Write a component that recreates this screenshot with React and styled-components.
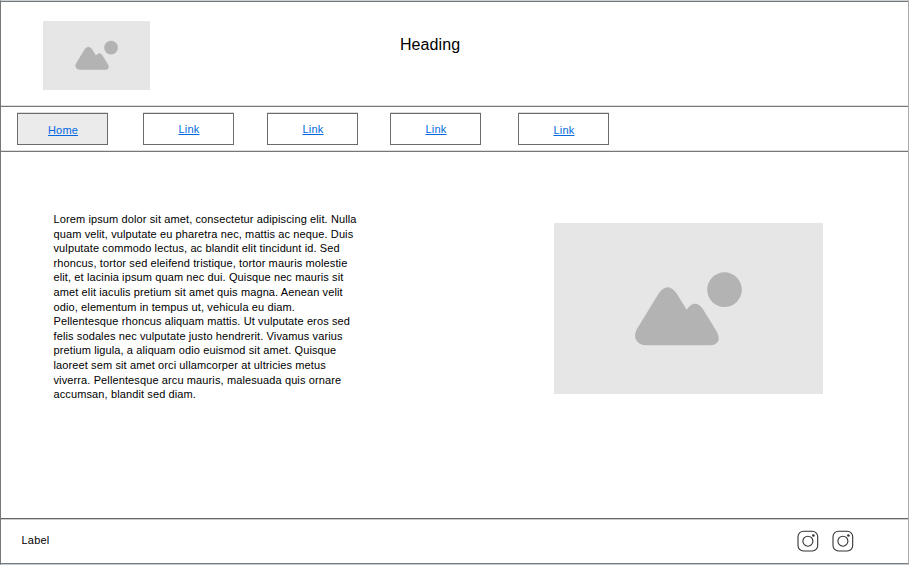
import React from "react";
import styled, { createGlobalStyle } from "styled-components";

const GlobalStyle = createGlobalStyle`
  * { box-sizing: border-box; }
  body {
    margin: 0;
    background: #fff;
    color: #000;
    font-family: "Liberation Sans", Arial, sans-serif;
  }
`;

const Page = styled.div`
  display: flex;
  flex-direction: column;
  width: 909px;
  height: 565px;
  overflow: hidden;
  border: solid #777;
  border-width: 1px 0 0 1px;
  border-top-color: #ccd0d2;
  border-right: 1px solid #aaa;
  border-bottom: 1px solid #c4cbce;
`;

const Header = styled.header`
  display: flex;
  align-items: flex-start;
  height: 106px;
  padding: 19.4px 0 0 42px;
  border-top: 1px solid #73787b;
  border-bottom: 1px solid #777;
  box-shadow: inset 0 -1px #ddd;
`;

const Title = styled.h1`
  margin: 14px 0 0 249.5px;
  font-size: 16px;
  line-height: 20px;
  font-weight: 400;
  letter-spacing: 0.1px;
`;

const Nav = styled.nav`
  display: flex;
  align-items: flex-start;
  height: 45px;
  padding: 6px 0 0 16px;
  border-bottom: 1px solid #777;
  box-shadow: inset 0 -1px #ddd;
`;

const NavLink = styled.a`
  width: 91px;
  height: 32px;
  margin-right: ${(p) => p.$gap || 0}px;
  padding: ${(p) => p.$drop || 9}px 0 0 1px;
  border: 1px solid #6b6b6b;
  box-shadow: 0 -1px #ddd;
  background: ${(p) => (p.$active ? "#ebebeb" : "#fff")};
  color: #0069e0;
  font-size: 11px;
  line-height: 13px;
  letter-spacing: 0.2px;
  text-align: center;
  text-decoration: underline;
  text-decoration-thickness: 1px;
  text-underline-offset: 1px;
`;

const Main = styled.main`
  display: flex;
  align-items: flex-start;
  justify-content: space-between;
  height: 366px;
  padding: 60px 85px 0 52.5px;
`;

const Copy = styled.p`
  margin: 0;
  font-size: 11px;
  line-height: 14.6px;
  letter-spacing: 0.115px;
  white-space: pre-line;
`;

const Picture = styled.svg`
  display: block;
  flex: none;
  width: ${(p) => p.$w}px;
  height: ${(p) => p.$h}px;
  margin-top: ${(p) => p.$top || 0}px;
  background: #e6e6e6;
`;

const Footer = styled.footer`
  display: flex;
  align-items: flex-start;
  height: 46px;
  padding: 11px 54px 0 20.5px;
  border-top: 1px solid #666;
  border-bottom: 1px solid #777c7f;
  box-shadow: inset 0 1px #ccc;
`;

const Label = styled.span`
  margin: 3px auto 0 0;
  font-size: 11px;
  line-height: 15px;
  letter-spacing: 0.2px;
`;

const Socials = styled.div`
  display: flex;
  gap: 13px;
`;

const Glyph = styled.svg`
  display: block;
  width: 22px;
  height: 22px;
  fill: none;
  stroke: #333;
  stroke-width: 1.1;
`;

function ImagePlaceholder({ width, height, top }) {
  return (
    <Picture $w={width} $h={height} $top={top} viewBox="0 0 807 515" preserveAspectRatio="none">
      <g fill="#b3b3b3">
        <circle cx="511.500" cy="200" r="52" />
        <path d="M313 213Q341 173 369 213L398 260Q422 226 446 257L489 327Q502 354 483 364Q477 367 468 367H279Q253 367 245 348Q240 335 248 320Z" />
      </g>
    </Picture>
  );
}

function Instagram() {
  return (
    <Glyph viewBox="0 0 22 22">
      <rect x="1" y="1.300" width="19.700" height="19.700" rx="5.500" />
      <circle cx="10.900" cy="11.200" r="5" />
      <circle cx="16.400" cy="5.500" r="1.300" fill="#333" stroke="none" />
    </Glyph>
  );
}

const links = [
  { text: "Home", gap: 35, active: true, drop: 10 },
  { text: "Link", gap: 33 },
  { text: "Link", gap: 32 },
  { text: "Link", gap: 37 },
  { text: "Link", drop: 10 },
];

const copy = `Lorem ipsum dolor sit amet, consectetur adipiscing elit. Nulla
quam velit, vulputate eu pharetra nec, mattis ac neque. Duis
vulputate commodo lectus, ac blandit elit tincidunt id. Sed
rhoncus, tortor sed eleifend tristique, tortor mauris molestie
elit, et lacinia ipsum quam nec dui. Quisque nec mauris sit
amet elit iaculis pretium sit amet quis magna. Aenean velit
odio, elementum in tempus ut, vehicula eu diam.
Pellentesque rhoncus aliquam mattis. Ut vulputate eros sed
felis sodales nec vulputate justo hendrerit. Vivamus varius
pretium ligula, a aliquam odio euismod sit amet. Quisque
laoreet sem sit amet orci ullamcorper at ultricies metus
viverra. Pellentesque arcu mauris, malesuada quis ornare
accumsan, blandit sed diam.`;

export default function App() {
  return (
    <>
      <GlobalStyle />
      <Page>
        <Header>
          <ImagePlaceholder width={107.4} height={68.5} />
          <Title>Heading</Title>
        </Header>
        <Nav>
          {links.map((l, i) => (
            <NavLink key={i} href="#" $gap={l.gap} $active={l.active} $drop={l.drop}>
              {l.text}
            </NavLink>
          ))}
        </Nav>
        <Main>
          <Copy>{copy}</Copy>
          <ImagePlaceholder width={269} height={171.6} top={10.6} />
        </Main>
        <Footer>
          <Label>Label</Label>
          <Socials>
            <Instagram />
            <Instagram />
          </Socials>
        </Footer>
      </Page>
    </>
  );
}
